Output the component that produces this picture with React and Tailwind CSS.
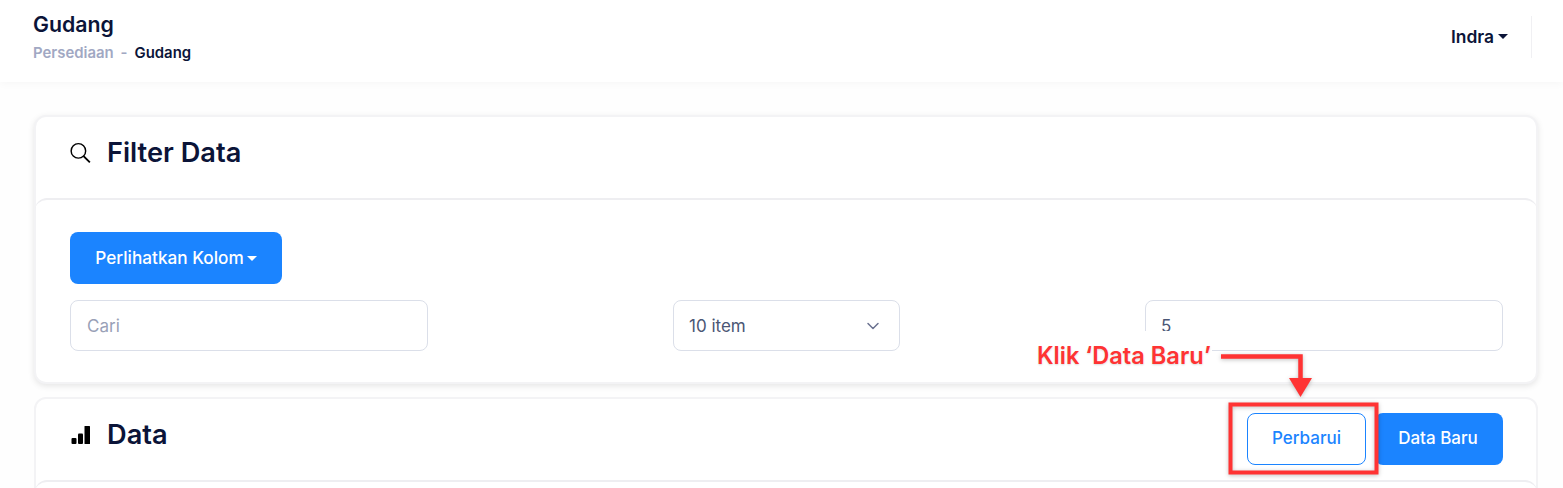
import React from 'react';
import { ChevronDown } from 'lucide-react';

const font = { fontFamily: 'Inter, "Liberation Sans", sans-serif' };

const Caret = ({ className = '' }) => (
  <span className={`inline-block w-0 h-0 border-x-[5px] border-x-transparent border-t-[5px] ${className}`} />
);

const SearchIcon = () => (
  <svg width="22" height="22" viewBox="0 0 22 22" fill="none" stroke="#000" strokeWidth="1.5">
    <circle cx="8.800" cy="8.800" r="7.600" />
    <path d="M14.200 14.200L20.800 20.800" strokeWidth="2" />
  </svg>
);

const BarsIcon = () => (
  <svg width="20" height="20" viewBox="0 0 20 20" fill="#000">
    <rect x="0.500" y="13" width="5" height="6" rx="1" />
    <rect x="7" y="8.500" width="5" height="10.500" rx="1" />
    <rect x="13.500" y="1" width="5.500" height="18" rx="0.500" />
  </svg>
);

const CardHeader = ({ icon, title, children }) => (
  <div className="h-[81px] flex items-start justify-between pl-[35px] pr-[34px]">
    <div className="flex items-center gap-[16px] pt-[17px]">
      <span className="w-[21px] flex justify-center">{icon}</span>
      <h2 className="text-[27.2px] leading-[38px] font-semibold text-[#0b1438]">{title}</h2>
    </div>
    {children}
  </div>
);

const App = () => {
  return (
    <div className="w-[1563px] h-[488px] overflow-hidden bg-[#fefefe] relative" style={font}>
      <header className="h-[82px] bg-white shadow-[0_2px_8px_rgba(0,0,0,0.03)] flex items-start justify-between pl-[33px] pr-[31px]">
        <div className="pt-[11px]">
          <h1 className="text-[21.300px] leading-[26px] font-semibold text-[#0b1438]">Gudang</h1>
          <div className="flex items-center mt-[8px] text-[14.900px] leading-[17px] font-semibold">
            <span className="text-[#a1a8c3]">Persediaan</span>
            <span className="text-[#a1a8c3] mx-[7px]">-</span>
            <span className="text-[#0b1438]">Gudang</span>
          </div>
        </div>
        <div className="flex items-center mt-[16px] h-[42px] border-r border-[#f0f0f3] pr-[23px]">
          <span className="text-[17.400px] font-semibold text-[#0b1438] mt-[1px]">Indra</span>
          <Caret className="ml-[4px] -mt-[1px] border-t-[#0b1438]" />
        </div>
      </header>

      <main className="pl-[34px] pr-[25px] pt-[33px]">
        <section className="rounded-[12px] bg-white border-2 border-[#f3f3f5] shadow-[0_2px_6px_rgba(0,0,0,0.1)] h-[269px]">
          <div className="-mx-[1px]">
            <CardHeader icon={<SearchIcon />} title="Filter Data" />
          </div>
          <div className="-mx-[1px] rounded-[12px] border-t-2 border-[#eeeef1] h-[184px] pl-[35px] pr-[34px] pt-[32px]">
            <button className="h-[52px] w-[212px] rounded-[8px] bg-[#1b84ff] text-white text-[17.200px] font-medium flex items-center justify-center">
              Perlihatkan Kolom
              <Caret className="ml-[3px] border-t-white" />
            </button>
            <div className="flex justify-between mt-[16px] text-[17px] text-[#4b5675]">
              <div className="w-[358px] h-[51px] rounded-[8px] border border-[#dbdfe9] flex items-center px-[16px] pt-[2px] text-[#99a1b7]">Cari</div>
              <div className="w-[227px] h-[51px] rounded-[8px] border border-[#dbdfe9] flex items-center justify-between pl-[15px] pr-[16px] pt-[2px]">
                10 item
                <ChevronDown size={20} strokeWidth={1.8} color="#6b7290" className="-mt-[2px]" />
              </div>
              <div className="w-[358px] h-[51px] rounded-[8px] border border-[#dbdfe9] flex items-center pl-[15px] pr-[16px] pt-[2px]">5</div>
            </div>
          </div>
        </section>

        <section className="mt-[13px] rounded-t-[12px] bg-white border-2 border-[#f3f3f5] h-[120px]">
          <div className="-mx-[1px]">
            <CardHeader icon={<BarsIcon />} title="Data">
              <div className="flex gap-[9px] pt-[14px]">
                <button className="h-[52px] w-[119px] rounded-[8px] bg-white border border-[#1b84ff] text-[#1b84ff] text-[17px] font-medium">Perbarui</button>
                <button className="h-[52px] w-[128px] pr-[2px] rounded-[8px] bg-[#1b84ff] text-white text-[17px] font-medium">Data Baru</button>
              </div>
            </CardHeader>
          </div>
          <div className="-mx-[1px] rounded-[12px] border-t-2 border-[#eeeef1] h-[40px]" />
        </section>
      </main>

      {/* annotation over the screenshot */}
      <div className="absolute left-[1030px] top-[331px] w-[182px] h-[48px] bg-white" />
      <span className="absolute left-[1037px] top-[341px] text-[23.600px] leading-[30px] font-semibold text-[#ff3333] whitespace-nowrap [text-shadow:0_1px_2px_rgba(0,0,0,0.15)]">Klik ‘Data Baru’</span>
      <svg className="absolute left-[1200px] top-[340px] drop-shadow-[0_1px_2px_rgba(0,0,0,0.25)]" width="180" height="140" viewBox="1200 340 180 140" fill="none">
        <path d="M1221 356.500H1300.500V380" stroke="#ff3333" strokeWidth="4.500" />
        <path d="M1289 378H1312L1300.500 397Z" fill="#ff3333" />
        <rect x="1230.500" y="404.500" width="146" height="68" stroke="#ff3333" strokeWidth="4" />
      </svg>
    </div>
  );
};

export default App;
